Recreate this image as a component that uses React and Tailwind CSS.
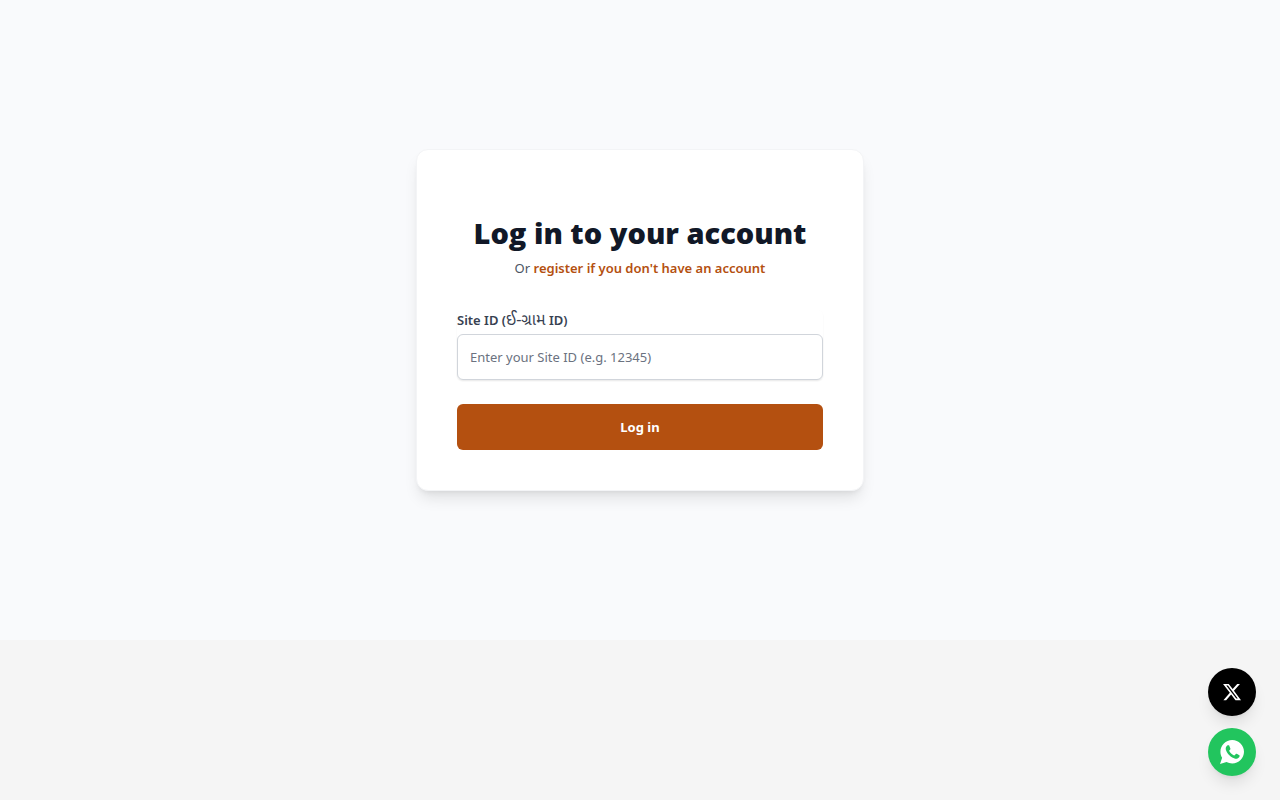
const SOCIAL = [
  { name: 'X', href: '#x', className: 'bg-black', icon: <XIcon /> },
  { name: 'WhatsApp', href: '#whatsapp', className: 'bg-[#22c55e]', icon: <WhatsAppIcon /> },
]

function XIcon() {
  return (
    <svg viewBox="0 0 24 24" className="w-5 h-5" fill="currentColor" aria-hidden="true">
      <path d="M18.244 2.25h3.308l-7.227 8.26 8.502 11.24H16.17l-5.214-6.817L4.99 21.75H1.68l7.73-8.835L1.254 2.25H8.08l4.713 6.231zm-1.161 17.52h1.833L7.084 4.126H5.117z" />
    </svg>
  )
}

function WhatsAppIcon() {
  return (
    <svg viewBox="32 32 448 448" className="w-6 h-6" aria-hidden="true">
      <path
        fill="currentColor"
        d="M260.062 32C138.605 32 40.134 129.701 40.134 250.232c0 41.229 11.532 79.79 31.559 112.687L32 480l121.764-38.682c31.508 17.285 67.745 27.146 106.298 27.146C381.535 468.464 480 370.749 480 250.232 480 129.701 381.535 32 260.062 32z"
      />
      <path
        fill="#22c55e"
        transform="translate(268 256) scale(1.16) translate(-262 -251)"
        d="M369.424 333.11c-5.174 12.827-28.574 24.533-38.899 25.072-10.314.547-10.608 7.994-66.84-16.434-56.225-24.434-90.052-83.844-92.719-87.67-2.669-3.812-21.78-31.047-20.749-58.455 1.038-27.413 16.047-40.346 21.404-45.725 5.351-5.387 11.486-6.352 15.232-6.413 4.428-.072 7.296-.132 10.573-.011 3.271.124 8.192-.685 12.45 10.639 4.256 11.323 14.443 39.153 15.746 41.989 1.302 2.839 2.108 6.126.102 9.771-2.012 3.653-3.042 5.935-5.961 9.083-2.935 3.148-6.174 7.042-8.792 9.449-2.92 2.665-5.97 5.572-2.9 11.269 3.068 5.693 13.653 24.356 29.779 39.736 20.725 19.771 38.598 26.329 44.098 29.317 5.515 3.004 8.806 2.67 12.226-.929 3.404-3.599 14.639-15.746 18.596-21.169 3.955-5.438 7.661-4.373 12.742-2.329 5.078 2.052 32.157 16.556 37.673 19.551 5.51 2.989 9.193 4.529 10.51 6.9 1.317 2.38.901 13.531-4.271 26.359z"
      />
    </svg>
  )
}

function SocialButtons() {
  return (
    <div className="fixed bottom-6 right-6 flex flex-col gap-3">
      {SOCIAL.map(s => (
        <a
          key={s.name}
          href={s.href}
          aria-label={s.name}
          className={`flex items-center justify-center w-12 h-12 rounded-full text-white shadow-lg ${s.className}`}
        >
          {s.icon}
        </a>
      ))}
    </div>
  )
}

function LoginForm() {
  return (
    <form className="mt-8" onSubmit={e => e.preventDefault()}>
      <div className="rounded-md shadow-xs">
        <label htmlFor="siteId" className="block text-[13px] leading-5 font-semibold text-[#374151]">
          Site ID (<span className="text-base leading-none font-normal">ઈ-ગ્રામ</span> ID)
        </label>
        <input
          id="siteId"
          type="text"
          placeholder="Enter your Site ID (e.g. 12345)"
          className="block w-full mt-1 px-3 py-3 text-[13px] leading-5 bg-white border border-[#d1d5db] rounded-md shadow-xs placeholder:text-[#6b7280]"
        />
      </div>
      <button
        type="submit"
        className="w-full mt-6 px-4 py-3 border border-transparent rounded-md bg-[#b45010] text-[13px] leading-5 font-bold text-white"
      >
        Log in
      </button>
    </form>
  )
}

export default function App() {
  return (
    <div className="min-h-screen bg-[#f5f5f5] font-['Noto_Sans','Noto_Sans_Gujarati',sans-serif]">
      <main className="flex items-center justify-center min-h-[80vh] px-4 bg-[#f9fafc]">
        <div className="w-full max-w-md p-10 bg-white border border-[#f3f4f6] rounded-xl shadow-lg">
          <h1 className="mt-6 text-center text-[29px] leading-[38px] font-extrabold font-['Open_Sans',sans-serif] text-[#111827]">
            Log in to your account
          </h1>
          <p className="mt-1.5 text-center text-[13px] leading-5 text-[#4b5563]">
            Or{' '}
            <a href="#register" className="font-semibold text-[#b45010]">
              register if you don't have an account
            </a>
          </p>
          <LoginForm />
        </div>
      </main>
      <SocialButtons />
    </div>
  )
}
